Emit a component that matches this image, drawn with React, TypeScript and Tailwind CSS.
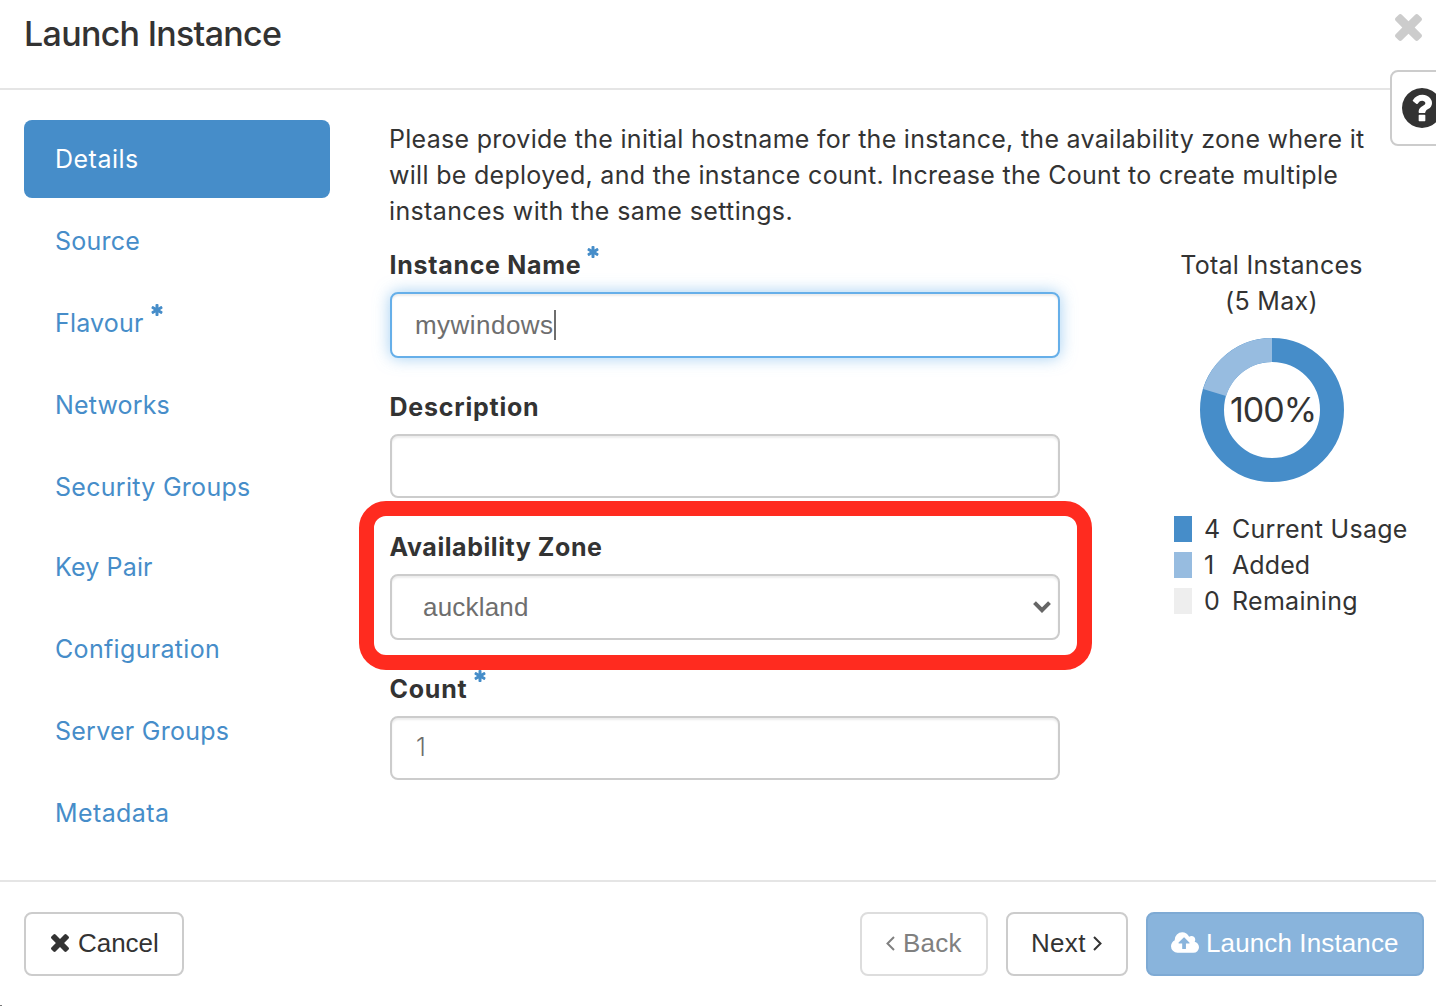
import React from "react";

const ASTERISK =
  "M1482 1050q46 26 59.500 77.500t-12.500 97.500l-64 110q-26 46-77.500 59.500t-97.500-12.500l-266-153v307q0 52-38 90t-90 38h-128q-52 0-90-38t-38-90v-307l-266 153q-46 26-97.500 12.500t-77.500-59.500l-64-110q-26-46-12.500-97.500t59.500-77.500l266-154-266-154q-46-26-59.500-77.500t12.500-97.500l64-110q26-46 77.500-59.500t97.500 12.500l266 153v-307q0-52 38-90t90-38h128q52 0 90 38t38 90v307l266-153q46-26 97.500-12.500t77.500 59.500l64 110q26 46 12.500 97.500t-59.500 77.500l-266 154z";
const TIMES =
  "M1490 1322q0 40-28 68l-136 136q-28 28-68 28t-68-28l-294-294-294 294q-28 28-68 28t-68-28l-136-136q-28-28-28-68t28-68l294-294-294-294q-28-28-28-68t28-68l136-136q28-28 68-28t68 28l294 294 294-294q28-28 68-28t68 28l136 136q28 28 28 68t-28 68l-294 294 294 294q28 28 28 68z";
const QUESTION =
  "M1024 1376v-192q0-14-9-23t-23-9h-192q-14 0-23 9t-9 23v192q0 14 9 23t23 9h192q14 0 23-9t9-23zm256-672q0-88-55.500-163t-138.500-116-170-41q-243 0-371 213-15 24 8 42l132 100q7 6 19 6 16 0 25-12 53-68 86-92 34-24 86-24 48 0 85.500 26t37.500 59q0 38-20 61t-68 45q-63 28-115.500 86.500t-52.500 125.500v36q0 14 9 23t23 9h192q14 0 23-9t9-23q0-19 21.500-49.500t54.500-49.500q32-18 49-28.500t46-35 44.500-48 28-60.500 12.500-81zm384 192q0 209-103 385.500t-279.500 279.500-385.500 103-385.500-103-279.500-279.500-103-385.500 103-385.500 279.500-279.500 385.500-103 385.500 103 279.500 279.500 103 385.500z";
const CLOUD =
  "M1216 864q0-14-9-23l-352-352q-9-9-23-9t-23 9l-351 351q-10 12-10 24 0 14 9 23t23 9h224v352q0 13 9.500 22.500t22.500 9.500h192q13 0 22.500-9.500t9.500-22.500v-352h224q13 0 22.500-9.500t9.500-22.500zm640 288q0 159-112.500 271.500t-271.500 112.500h-1088q-185 0-316.500-131.500t-131.500-316.500q0-130 70-240t188-165q-2-30-2-43 0-212 150-362t362-150q156 0 285.500 87t188.500 231q71-62 166-62 106 0 181 75t75 181q0 76-41 138 130 31 213.500 135.500t83.500 238.500z";

function Icon({ d, box, className }: { d: string; box: string; className: string }) {
  return (
    <svg viewBox={box} className={className} fill="currentColor" aria-hidden="true">
      <path d={d} />
    </svg>
  );
}

function Required({ className }: { className: string }) {
  return <Icon d={ASTERISK} box="122 128 1420 1536" className={`h-3 w-3 shrink-0 text-[#468dc9] ${className}`} />;
}

const steps = [
  { name: "Details", cls: "bg-[#468dc9] text-white tracking-[0.5px]" },
  { name: "Source", cls: "text-[#468dc9] tracking-[0.22px]" },
  { name: "Flavour", cls: "text-[#468dc9] tracking-[0.18px]", required: true },
  { name: "Networks", cls: "text-[#468dc9] tracking-[0.15px]" },
  { name: "Security Groups", cls: "text-[#468dc9] tracking-[0.29px]" },
  { name: "Key Pair", cls: "-mt-0.5 text-[#468dc9] tracking-[0.15px]" },
  { name: "Configuration", cls: "text-[#468dc9] tracking-[0.33px]" },
  { name: "Server Groups", cls: "text-[#468dc9] tracking-[0.25px]" },
  { name: "Metadata", cls: "text-[#468dc9] tracking-[0.4px]" },
];

const legend = [
  { n: 4, label: "Current Usage", cls: "bg-[#468dc9]", text: "tracking-[0.27px]" },
  { n: 1, label: "Added", cls: "bg-[#97bce0]", text: "tracking-[0.1px]" },
  { n: 0, label: "Remaining", cls: "bg-[#eeeeee]", text: "tracking-[0.3px]" },
];

const field =
  "flex w-[670px] items-center rounded-lg border-2 bg-white font-['Liberation_Sans',Arial,sans-serif] text-[26px] text-[#6e6e6e]";
const idle = "border-[#cccccc] shadow-[inset_0_2px_2px_rgba(0,0,0,0.075)]";
const button =
  "flex h-16 items-center rounded-lg border-2 pb-[2px] font-['Liberation_Sans',Arial,sans-serif] text-[26px] leading-none whitespace-nowrap";

function Label({ children, className = "" }: { children: React.ReactNode; className?: string }) {
  return <label className={`flex h-9 items-center leading-9 font-bold ${className}`}>{children}</label>;
}

function Donut() {
  return (
    <div className="relative h-36 w-36">
      <svg viewBox="-72 -72 144 144" className="h-36 w-36">
        <circle r="60" fill="none" stroke="#468dc9" strokeWidth="24" />
        <path d="M0 -60A60 60 0 0 0 -57.4 -17.4" fill="none" stroke="#97bce0" strokeWidth="24" />
      </svg>
      <span className="absolute inset-0 flex items-center justify-center pl-[2px] text-[34px] tracking-[-1px]">100%</span>
    </div>
  );
}

export default function App() {
  return (
    <div className="relative flex h-[1006px] w-[1436px] flex-col overflow-hidden bg-white font-[Inter,sans-serif] text-[25px] text-[#333333]">
      <header className="flex h-[90px] shrink-0 items-start justify-between border-b-2 border-[#e5e5e5] pr-[14px] pl-6">
        <h4 className="mt-[14px] text-[34px] leading-10 font-[450] tracking-[-0.7px]">Launch Instance</h4>
        <button className="mt-[14px] text-[#cccccc]" aria-label="Close">
          <Icon d={TIMES} box="302 366 1188 1188" className="h-[27px] w-[27px]" />
        </button>
      </header>
      <button
        aria-label="Help"
        className="absolute top-[70px] -right-10 flex h-[76px] w-[86px] items-center rounded-lg border-2 border-[#cccccc] bg-white pb-px pl-[10px]"
      >
        <Icon d={QUESTION} box="128 128 1536 1536" className="h-10 w-10" />
      </button>

      <main className="flex h-[792px] shrink-0 items-start border-b-2 border-[#e5e5e5] pt-[30px] pl-6">
        <nav className="flex w-[306px] flex-col gap-1">
          {steps.map((s) => (
            <a key={s.name} className={`flex h-[78px] shrink-0 items-center rounded-lg pt-[2px] pl-[31px] ${s.cls}`}>
              {s.name}
              {s.required && <Required className="mb-[28px] ml-[7px]" />}
            </a>
          ))}
        </nav>

        <section className="ml-[60px] w-[1020px]">
          <p className="mt-[1px] leading-9 whitespace-nowrap">
            <span className="-ml-px block tracking-[0.285px]">
              Please provide the initial hostname for the instance, the availability zone where it
            </span>
            <span className="-ml-px block tracking-[0.295px]">
              will be deployed, and the instance count. Increase the Count to create multiple
            </span>
            <span className="-ml-px block tracking-[0.36px]">instances with the same settings.</span>
          </p>

          <div className="flex items-start">
            <form className="mt-[18px] w-[670px]">
              <Label className="-ml-[0.5px] tracking-[0.71px]">
                Instance Name
                <Required className="mb-[26px] ml-[6px]" />
              </Label>
              <div
                className={`${field} mt-[9px] h-[66px] border-[#66afe9] pl-[23px] shadow-[inset_0_2px_2px_rgba(0,0,0,0.075),0_0_16px_rgba(102,175,233,0.6)]`}
              >
                <span className="tracking-[0.46px]">mywindows</span>
                <span className="h-[30px] w-[2px] bg-[#6e6e6e]" />
              </div>

              <Label className="mt-[31px] -ml-[0.5px] tracking-[0.78px]">Description</Label>
              <div className={`${field} ${idle} mt-[9px] h-16`} />

              <div className="relative mt-[31px]">
                <Label className="-ml-[0.5px] tracking-[0.56px]">Availability Zone</Label>
                <div className={`${field} ${idle} mt-[9px] h-[66px] justify-between pr-[7px] pl-[31px]`}>
                  <span className="tracking-[0.2px]">auckland</span>
                  <svg viewBox="0 0 18 12" className="mb-px h-3 w-[18px]" fill="none" stroke="#666666" strokeWidth="4">
                    <path d="M1.5 1.7L9 9.2L16.500 1.7" />
                  </svg>
                </div>
                <div className="pointer-events-none absolute -top-[28px] -left-[31px] h-[169px] w-[733px] rounded-[27px] border-[15px] border-[#ff2b1f]" />
              </div>

              <Label className="mt-[31px] -ml-[0.5px] tracking-[0.75px]">
                Count
                <Required className="mb-[26px] ml-[7px]" />
              </Label>
              <div className={`${field} ${idle} mt-[9px] h-16 pl-6`}>
                <span className="font-[Inter,sans-serif] text-[25px] font-light">1</span>
              </div>
            </form>

            <aside className="mt-[18px] ml-[112px] flex w-[240px] flex-col">
              <div className="flex w-[200px] flex-col items-center leading-9 whitespace-nowrap">
                <span className="-ml-px tracking-[0.27px]">Total Instances</span>
                <span className="-ml-px tracking-[0.3px]">(5 Max)</span>
                <div className="mt-[19px]">
                  <Donut />
                </div>
              </div>
              <ul className="mt-[29px] ml-[2px] leading-9">
                {legend.map((l) => (
                  <li key={l.label} className="flex h-9 items-center whitespace-nowrap">
                    <span className={`h-[26px] w-[18px] ${l.cls}`} />
                    <span className="ml-3 w-7">{l.n}</span>
                    <span className={l.text}>{l.label}</span>
                  </li>
                ))}
              </ul>
            </aside>
          </div>
        </section>
      </main>

      <footer className="flex shrink-0 items-center pt-[30px] pl-6">
        <button className={`${button} w-40 border-[#cccccc] pl-[25px]`}>
          <Icon d={TIMES} box="302 366 1188 1188" className="h-[18px] w-[18px]" />
          <span className="ml-[9px] tracking-[-0.05px]">Cancel</span>
        </button>
        <button className={`${button} ml-[676px] w-32 border-[#dddddd] pl-6 text-[#808080]`}>
          <svg viewBox="0 0 9 15" className="mt-px h-[15px] w-[9px]" fill="none" stroke="currentColor" strokeWidth="2">
            <path d="M8 1L1.500 7.500L8 14" />
          </svg>
          <span className="ml-2 tracking-[0.2px]">Back</span>
        </button>
        <button className={`${button} ml-[18px] w-[122px] border-[#cccccc] pl-[23px]`}>
          <span className="tracking-[0.3px]">Next</span>
          <svg viewBox="0 0 9 15" className="mt-px ml-[7px] h-[15px] w-[9px]" fill="none" stroke="currentColor" strokeWidth="2">
            <path d="M1 1L7.500 7.500L1 14" />
          </svg>
        </button>
        <button className={`${button} ml-[18px] w-[278px] border-[#7eaad4] bg-[#89b4dc] pl-[23px] text-white`}>
          <Icon d={CLOUD} box="-64 128 1920 1408" className="mb-[2px] h-[21px] w-7" />
          <span className="ml-[7px] tracking-[0.12px]">Launch Instance</span>
        </button>
      </footer>
      <span className="absolute bottom-0 left-0 h-px w-0.5 bg-[#777777]" />
    </div>
  );
}
